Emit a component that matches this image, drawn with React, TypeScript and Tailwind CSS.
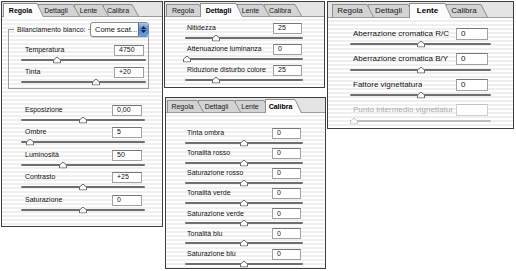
import React from "react";

const FONT = "font-['Liberation_Sans',Arial,sans-serif]";
const STRIPES =
  "bg-[image:repeating-linear-gradient(180deg,#ffffff_0px,#ffffff_2px,#efefef_2px,#efefef_4px)]";

const TAB_NAMES = ["Regola", "Dettagli", "Lente", "Calibra"];

function TabStrip({
  active,
  widths,
  big,
  lead,
}: {
  active: string;
  widths: string[];
  big?: boolean;
  lead: string;
}) {
  const h = big ? 15 : 14;
  return (
    <div
      className={`flex items-end ${lead} ${big ? "h-[16px]" : "h-[15px]"} bg-[#e4e4e4] border-b border-[#9a9a9a] shrink-0`}
    >
      {TAB_NAMES.map((n, i) => {
        const isActive = n === active;
        const fill = isActive ? "#fbfbfb" : "#d3d3d3";
        const z = isActive ? "z-[10]" : ["z-[4]", "z-[3]", "z-[2]", "z-[1]"][i];
        const th = isActive ? h : h - 2;
        return (
          <div
            key={n}
            className={`relative flex items-stretch ${z} ${i > 0 ? "-ml-[6px]" : ""} ${isActive ? "-mb-[1px]" : ""}`}
          >
            <div
              className={`${widths[i]} flex items-center justify-center border-l border-t border-[#8f8f8f] ${
                isActive ? "bg-[#fbfbfb] font-bold text-black" : "bg-[#d3d3d3] text-[#1a1a1a]"
              } ${big ? "text-[8px]" : "text-[7px]"} leading-none ${isActive ? (big ? "h-[15px]" : "h-[14px]") : big ? "h-[13px]" : "h-[12px]"}`}
            >
              {n}
            </div>
            <svg width="7" height={th} viewBox={`0 0 7 ${th}`} className="block">
              <path d={`M0 0 L0.5 0.5 L6.5 ${th} L0 ${th} Z`} fill={fill} />
              <line x1="0" y1="0.5" x2="6.5" y2={th} stroke="#8f8f8f" strokeWidth="1" />
            </svg>
          </div>
        );
      })}
    </div>
  );
}

function Thumb({ disabled }: { disabled?: boolean }) {
  return (
    <svg width="8" height="7" viewBox="0 0 8 7" className="block">
      <path
        d="M4 0.5 L7.5 3.5 L7.5 6.5 L0.5 6.5 L0.5 3.5 Z"
        fill="#fafafa"
        stroke={disabled ? "#c4c4c4" : "#6a6a6a"}
        strokeWidth="1"
      />
    </svg>
  );
}

function Slider({ pos, h, disabled }: { pos: number; h: string; disabled?: boolean }) {
  return (
    <div className={`relative flex items-center ${h}`}>
      <div
        className={`w-full h-[2px] rounded-full ${disabled ? "bg-[#bdbdbd]" : "bg-[#6f6f6f]"}`}
      />
      <div
        className="absolute top-1/2 -translate-x-1/2 -translate-y-1/2"
        style={{ left: `${pos * 100}%` }}
      >
        <Thumb disabled={disabled} />
      </div>
    </div>
  );
}

type RowData = { label: string; value: string; pos: number; disabled?: boolean };

function Row({
  r,
  labelRow,
  input,
  slider,
  text,
  labelCls,
}: {
  r: RowData;
  labelRow: string;
  input: string;
  slider: string;
  text: string;
  labelCls?: string;
}) {
  return (
    <div className="flex flex-col">
      <div className={`flex items-center justify-between ${labelRow}`}>
        <span
          className={`${text} whitespace-nowrap ${labelCls ?? ""} ${r.disabled ? "text-[#a9a9a9]" : "text-[#111]"}`}
        >
          {r.label}
        </span>
        <div
          className={`${input} bg-white border border-[#a2a2a2] border-t-[#777] flex items-center pl-[4px] ${text} ${
            r.disabled ? "border-[#cfcfcf] border-t-[#c2c2c2]" : "text-[#111]"
          }`}
        >
          {r.value}
        </div>
      </div>
      <Slider pos={r.pos} h={slider} disabled={r.disabled} />
    </div>
  );
}

function Panel({
  className,
  children,
  tabs,
}: {
  className: string;
  children: React.ReactNode;
  tabs: React.ReactNode;
}) {
  return (
    <div className={`flex flex-col border border-[#3f3f3f] overflow-hidden shrink-0 ${className}`}>
      {tabs}
      <div className={`flex-1 flex flex-col ${STRIPES}`}>{children}</div>
    </div>
  );
}

const regolaWB: RowData[] = [
  { label: "Temperatura", value: "4750", pos: 0.29 },
  { label: "Tinta", value: "+20", pos: 0.6 },
];
const regolaRows: RowData[] = [
  { label: "Esposizione", value: "0,00", pos: 0.5 },
  { label: "Ombre", value: "5", pos: 0.07 },
  { label: "Luminosità", value: "50", pos: 0.34 },
  { label: "Contrasto", value: "+25", pos: 0.5 },
  { label: "Saturazione", value: "0", pos: 0.5 },
];
const dettagliRows: RowData[] = [
  { label: "Nitidezza", value: "25", pos: 0.26 },
  { label: "Attenuazione luminanza", value: "0", pos: 0.02 },
  { label: "Riduzione disturbo colore", value: "25", pos: 0.26 },
];
const calibraRows: RowData[] = [
  { label: "Tinta ombra", value: "0", pos: 0.5 },
  { label: "Tonalità rosso", value: "0", pos: 0.5 },
  { label: "Saturazione rosso", value: "0", pos: 0.5 },
  { label: "Tonalità verde", value: "0", pos: 0.5 },
  { label: "Saturazione verde", value: "0", pos: 0.5 },
  { label: "Tonalità blu", value: "0", pos: 0.5 },
  { label: "Saturazione blu", value: "0", pos: 0.5 },
];
const lenteRows: RowData[] = [
  { label: "Aberrazione cromatica R/C", value: "0", pos: 0.5 },
  { label: "Aberrazione cromatica B/Y", value: "0", pos: 0.5 },
  { label: "Fattore vignettatura", value: "0", pos: 0.5 },
  { label: "Punto intermedio vignettatura", value: "", pos: 0.03, disabled: true },
];

function PopupButton() {
  return (
    <div className="flex items-stretch h-[15px] w-[59px] shrink-0 rounded-[3px] border border-[#8a8a8a] bg-white overflow-hidden shadow-[0_1px_0_#cfcfcf]">
      <div className="flex-1 flex items-center pl-[4px] text-[7.5px] text-[#111] whitespace-nowrap">
        Come scat...
      </div>
      <div className="w-[10px] bg-[linear-gradient(180deg,#a9c8f0,#4f86d6_50%,#6d9de0)] flex flex-col items-center justify-center gap-[1px] border-l border-[#4a6fa8]">
        <svg width="5" height="3" viewBox="0 0 5 3" className="block">
          <path d="M0 3 L2.5 0 L5 3 Z" fill="#0c1e3c" />
        </svg>
        <svg width="5" height="3" viewBox="0 0 5 3" className="block">
          <path d="M0 0 L2.5 3 L5 0 Z" fill="#0c1e3c" />
        </svg>
      </div>
    </div>
  );
}

export default function App() {
  return (
    <div className={`w-[516px] h-[271px] bg-white flex items-start pl-[1px] pt-[1px] ${FONT}`}>
      {/* Regola */}
      <Panel
        className="w-[162px] h-[226px]"
        tabs={
          <TabStrip
            active="Regola"
            lead="pl-[1px]"
            widths={["w-[34px]", "w-[35px]", "w-[28px]", "w-[29px]"]}
          />
        }
      >
        <div className="mt-[12px] ml-[6px] w-[141px] border border-[#9a9a9a] flex flex-col pb-[2.5px]">
          <div className="-mt-[8px] -mr-[1px] flex items-center h-[15px]">
            <span className="ml-[5px] pl-[3px] pr-[2px] bg-[#fbfbfb] text-[7px] leading-[9px] text-[#111] whitespace-nowrap min-w-0">
              Bilanciamento bianco:
            </span>
            <div className="ml-auto">
              <PopupButton />
            </div>
          </div>
          <div className="mt-[7px] pl-[12px] pr-[2px] flex flex-col gap-[3.5px]">
            {regolaWB.map((r) => (
              <Row
                key={r.label}
                r={r}
                labelRow="h-[12px] pl-[4px] pr-[2px]"
                input="w-[30px] h-[11px]"
                slider="h-[7px]"
                text="text-[7px]"
              />
            ))}
          </div>
        </div>
        <div className="mt-[15px] ml-[19px] w-[124px] flex flex-col gap-[3.5px]">
          {regolaRows.map((r) => (
            <Row
              key={r.label}
              r={r}
              labelRow="h-[12px] pl-[4px] pr-[3px]"
              input="w-[30px] h-[11px]"
              slider="h-[7px]"
              text="text-[7px]"
            />
          ))}
        </div>
      </Panel>

      {/* Middle column */}
      <div className="ml-[1px] flex flex-col shrink-0">
        <Panel
          className="w-[161px] h-[87px]"
          tabs={
            <TabStrip
              active="Dettagli"
              lead="pl-[1px]"
              widths={["w-[33px]", "w-[36px]", "w-[26px]", "w-[31px]"]}
            />
          }
        >
          <div className="mt-[5px] ml-[20px] w-[118px] flex flex-col gap-[2px]">
            {dettagliRows.map((r) => (
              <Row
                key={r.label}
                r={r}
                labelRow="h-[12px] pl-[2px] pr-[1px]"
                input="w-[29px] h-[11px]"
                slider="h-[7px]"
                text="text-[7px]"
              />
            ))}
          </div>
        </Panel>
        <Panel
          className="mt-[9px] ml-[1px] w-[161px] h-[172px]"
          tabs={
            <TabStrip
              active="Calibra"
              lead="pl-[1px]"
              widths={["w-[30px]", "w-[36px]", "w-[29px]", "w-[30px]"]}
            />
          }
        >
          <div className="mt-[14px] ml-[19px] w-[118px] flex flex-col gap-[1.2px]">
            {calibraRows.map((r) => (
              <Row
                key={r.label}
                r={r}
                labelRow="h-[12px] pl-[2px] pr-[2px]"
                input="w-[29px] h-[11px]"
                slider="h-[7px]"
                text="text-[7px]"
              />
            ))}
          </div>
        </Panel>
      </div>

      {/* Lente */}
      <Panel
        className="ml-[1px] w-[187px] h-[128px]"
        tabs={
          <TabStrip
            active="Lente"
            big
            lead="pl-[4px]"
            widths={["w-[35px]", "w-[40px]", "w-[36px]", "w-[35px]"]}
          />
        }
      >
        <div className="mt-[9px] ml-[22px] w-[141px] flex flex-col gap-[4.67px]">
          {lenteRows.map((r) => (
            <Row
              key={r.label}
              r={r}
              labelRow="h-[13px] pl-[3px] pr-[3px] gap-[3px]"
              input="w-[32px] h-[12px] shrink-0"
              slider="h-[8px]"
              text="text-[8px]"
              labelCls="overflow-hidden min-w-0"
            />
          ))}
        </div>
      </Panel>
    </div>
  );
}
